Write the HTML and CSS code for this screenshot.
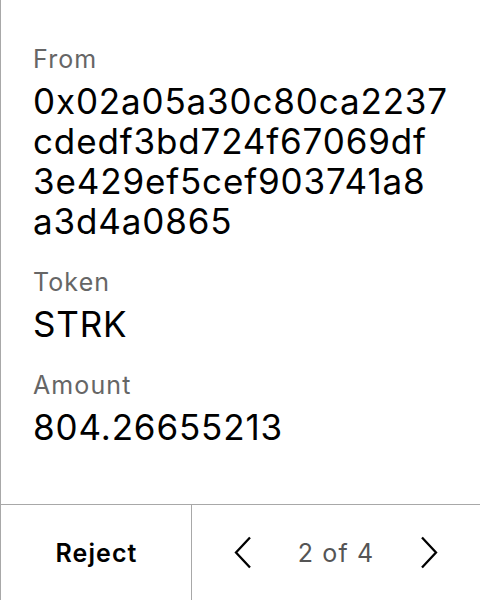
FILE: index.html
```html
<!DOCTYPE html>
<html>
<head>
<meta charset="utf-8">
<link rel="stylesheet" href="styles.css">
</head>
<body>
<div class="screen">
  <div class="content">
    <div class="field">
      <div class="label">From</div>
      <div class="value">0x02a05a30c80ca2237<br>cdedf3bd724f67069df<br>3e429ef5cef903741a8<br>a3d4a0865</div>
    </div>
    <div class="field">
      <div class="label">Token</div>
      <div class="value">STRK</div>
    </div>
    <div class="field">
      <div class="label">Amount</div>
      <div class="value">804.26655213</div>
    </div>
  </div>
  <div class="footer">
    <div class="reject">Reject</div>
    <div class="pager">
      <svg class="chev" width="18" height="33" viewBox="0 0 18 33"><polyline points="16,1.5 2,16.5 16,31.5" fill="none" stroke="#000" stroke-width="2.3"/></svg>
      <span class="count">2 of 4</span>
      <svg class="chev" width="18" height="33" viewBox="0 0 18 33"><polyline points="2,1.5 16,16.5 2,31.5" fill="none" stroke="#000" stroke-width="2.3"/></svg>
    </div>
  </div>
</div>
</body>
</html>
```
FILE: styles.css
```css
html, body {
  margin: 0;
  padding: 0;
  background: #fff;
}
.screen {
  width: 480px;
  height: 600px;
  box-sizing: border-box;
  border-left: 1px solid #a8a8a8;
  display: flex;
  flex-direction: column;
  font-family: Inter, "Noto Sans", sans-serif;
  color: #000;
}
.content {
  flex: 1;
  padding: 43px 0 0 32px;
  display: flex;
  flex-direction: column;
  gap: 25px;
}
.field {
  display: flex;
  flex-direction: column;
  gap: 6px;
}
.label {
  font-size: 25px;
  line-height: 32px;
  letter-spacing: 1.1px;
  color: #666;
}
.value {
  font-size: 35px;
  line-height: 40px;
  letter-spacing: 0.85px;
  color: #000;
}
.footer {
  height: 96px;
  border-top: 1px solid #a8a8a8;
  display: flex;
  box-sizing: border-box;
}
.reject {
  width: 191px;
  border-right: 1px solid #a8a8a8;
  display: flex;
  align-items: center;
  justify-content: center;
  font-size: 25px;
  font-weight: 600;
  letter-spacing: 1.1px;
  padding-left: 1px;
  box-sizing: border-box;
}
.pager {
  flex: 1;
  display: flex;
  align-items: center;
  justify-content: center;
  gap: 46px;
}
.count {
  font-size: 25px;
  letter-spacing: 1.1px;
  color: #555;
}
.chev {
  display: block;
}
```
